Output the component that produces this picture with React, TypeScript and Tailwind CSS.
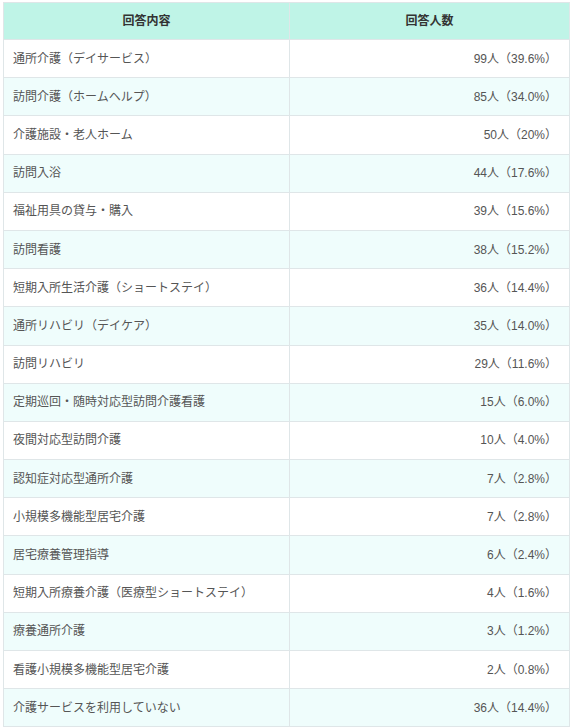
const rows: [string, string][] = [
  ["通所介護（デイサービス）", "99人（39.6%）"],
  ["訪問介護（ホームヘルプ）", "85人（34.0%）"],
  ["介護施設・老人ホーム", "50人（20%）"],
  ["訪問入浴", "44人（17.6%）"],
  ["福祉用具の貸与・購入", "39人（15.6%）"],
  ["訪問看護", "38人（15.2%）"],
  ["短期入所生活介護（ショートステイ）", "36人（14.4%）"],
  ["通所リハビリ（デイケア）", "35人（14.0%）"],
  ["訪問リハビリ", "29人（11.6%）"],
  ["定期巡回・随時対応型訪問介護看護", "15人（6.0%）"],
  ["夜間対応型訪問介護", "10人（4.0%）"],
  ["認知症対応型通所介護", "7人（2.8%）"],
  ["小規模多機能型居宅介護", "7人（2.8%）"],
  ["居宅療養管理指導", "6人（2.4%）"],
  ["短期入所療養介護（医療型ショートステイ）", "4人（1.6%）"],
  ["療養通所介護", "3人（1.2%）"],
  ["看護小規模多機能型居宅介護", "2人（0.8%）"],
  ["介護サービスを利用していない", "36人（14.4%）"],
]

export default function App() {
  return (
    <div className="bg-white pt-[2px] pl-[3px] pr-[3px] font-['Liberation_Sans','Noto_Sans_CJK_JP',sans-serif] text-[12px] text-[#555]">
      <table className="w-[567px] border-collapse table-fixed">
        <thead>
          <tr className="bg-[#bff4e7] h-[37px]">
            <th className="w-[286px] border border-[#dfe6e8] font-bold text-[#333] text-center">回答内容</th>
            <th className="border border-[#dfe6e8] font-bold text-[#333] text-center">回答人数</th>
          </tr>
        </thead>
        <tbody>
          {rows.map(([label, count], i) => (
            <tr key={i} className={i % 2 === 1 ? "bg-[#effdfc] h-[38.2px]" : "bg-white h-[38.2px]"}>
              <td className="border border-[#dfe6e8] pl-[9px] text-left">{label}</td>
              <td className="border border-[#dfe6e8] pr-[12px] text-right">{count}</td>
            </tr>
          ))}
        </tbody>
      </table>
    </div>
  )
}
